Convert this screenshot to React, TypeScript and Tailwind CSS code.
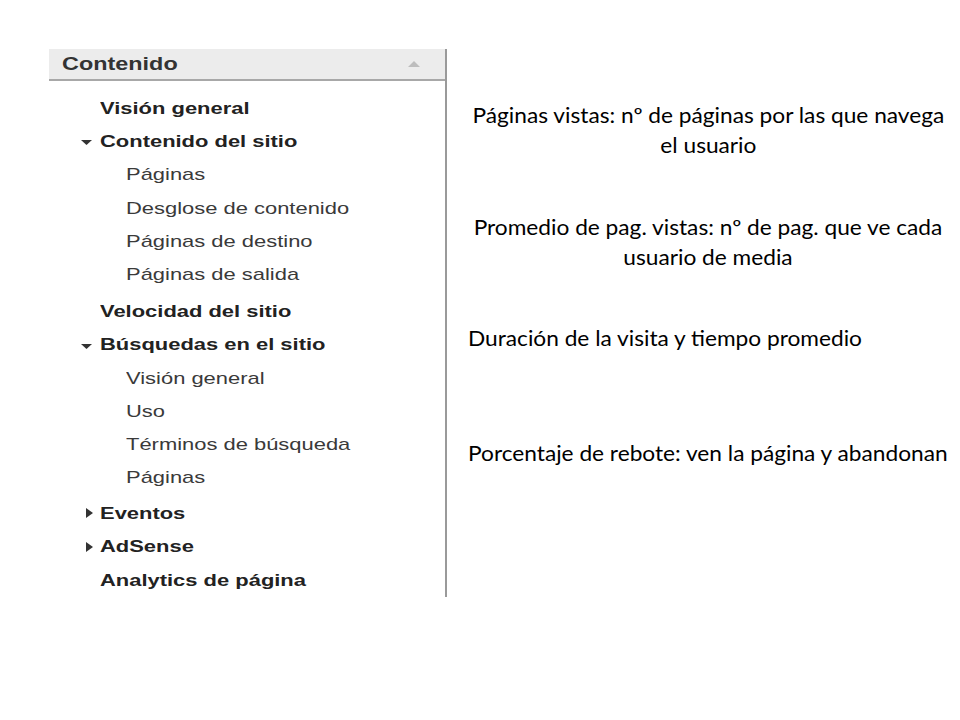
import React from 'react';

type Item = { label: string; kind: 'bold' | 'sub'; caret?: 'down' | 'right'; extra?: string };

const items: Item[] = [
    { label: 'Visión general', kind: 'bold' },
    { label: 'Contenido del sitio', kind: 'bold', caret: 'down' },
    { label: 'Páginas', kind: 'sub' },
    { label: 'Desglose de contenido', kind: 'sub' },
    { label: 'Páginas de destino', kind: 'sub' },
    { label: 'Páginas de salida', kind: 'sub' },
    { label: 'Velocidad del sitio', kind: 'bold', extra: 'mt-[4px]' },
    { label: 'Búsquedas en el sitio', kind: 'bold', caret: 'down' },
    { label: 'Visión general', kind: 'sub' },
    { label: 'Uso', kind: 'sub' },
    { label: 'Términos de búsqueda', kind: 'sub' },
    { label: 'Páginas', kind: 'sub' },
    { label: 'Eventos', kind: 'bold', caret: 'right', extra: 'mt-[3px]' },
    { label: 'AdSense', kind: 'bold', caret: 'right' },
    { label: 'Analytics de página', kind: 'bold' },
];

const Caret: React.FC<{ dir: 'down' | 'right' }> = ({ dir }) =>
    dir === 'down' ? (
        <svg width="11" height="6" viewBox="0 0 11 6" className="absolute left-[-19px] top-[15px]">
            <polygon points="0,0 11,0 5.5,5" fill="#333" />
        </svg>
    ) : (
        <svg width="7" height="10" viewBox="0 0 7 10" className="absolute left-[-14px] top-[11px]">
            <polygon points="0,0 7,5 0,10" fill="#333" />
        </svg>
    );

const NavRow: React.FC<{ item: Item }> = ({ item }) => {
    const isBold = item.kind === 'bold';
    return (
        <div className={`relative h-[33.2px] flex items-center ${isBold ? 'pl-[51px]' : 'pl-[77px]'} ${item.extra ?? ''}`}>
            <div className="relative h-full flex items-center">
                {item.caret && <Caret dir={item.caret} />}
                <span
                    className={`inline-block origin-left scale-x-[1.29] whitespace-nowrap text-[17px] ${
                        isBold ? 'font-bold text-[#222]' : 'text-[#3a3a3a]'
                    }`}
                >
                    {item.label}
                </span>
            </div>
        </div>
    );
};

const App: React.FC = () => {
    return (
        <div className="w-[960px] h-[720px] bg-white flex overflow-hidden">
            {/* Sidebar */}
            <div
                className="ml-[49px] mt-[49px] w-[398px] h-[548px] border-r-2 border-[#9a9a9a] flex flex-col"
                style={{ fontFamily: '"Liberation Sans", Arial, sans-serif' }}
            >
                <div className="h-[33px] bg-[#ececec] border-b-2 border-[#a8a8a8] flex items-center justify-between pl-[13px] pr-[25px]">
                    <span className="inline-block origin-left scale-x-[1.3] text-[18px] font-bold text-[#333]">Contenido</span>
                    <svg width="12" height="6" viewBox="0 0 12 6">
                        <polygon points="0,6 6,0 12,6" fill="#bdbdbd" />
                    </svg>
                </div>
                <div className="mt-[11px] flex flex-col">
                    {items.map((it, i) => (
                        <NavRow key={i} item={it} />
                    ))}
                </div>
            </div>

            {/* Notes */}
            <div
                className="w-[480px] ml-[21px] flex flex-col text-[21px] leading-[30px] text-black"
                style={{ fontFamily: 'Lato, "Open Sans", sans-serif' }}
            >
                <p className="mt-[100px] text-center">
                    <span className="inline-block origin-center scale-x-[1.08] whitespace-nowrap">
                        Páginas vistas: nº de páginas por las que navega
                        <br />
                        el usuario
                    </span>
                </p>
                <p className="mt-[52px] text-center">
                    <span className="inline-block origin-center scale-x-[1.08] whitespace-nowrap">
                        Promedio de pag. vistas: nº de pag. que ve cada
                        <br />
                        usuario de media
                    </span>
                </p>
                <p className="mt-[51px]">
                    <span className="inline-block origin-left scale-x-[1.08] whitespace-nowrap">
                        Duración de la visita y tiempo promedio
                    </span>
                </p>
                <p className="mt-[85px]">
                    <span className="inline-block origin-left scale-x-[1.08] whitespace-nowrap">
                        Porcentaje de rebote: ven la página y abandonan
                    </span>
                </p>
            </div>
        </div>
    );
};

export default App;
